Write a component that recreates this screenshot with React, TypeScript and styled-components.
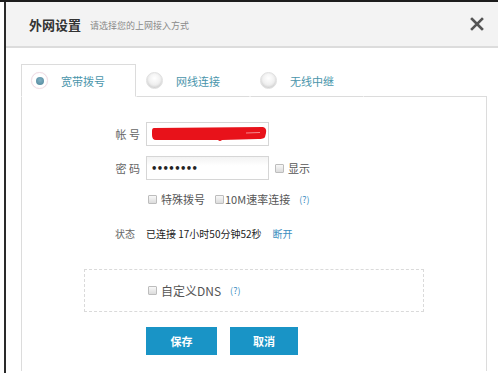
import React from "react";
import styled, { createGlobalStyle } from "styled-components";

const Global = createGlobalStyle`
  html, body { margin: 0; padding: 0; background: #fff; }
  body { font-family: "Noto Sans CJK SC", "Noto Sans", sans-serif; }
  * { box-sizing: border-box; }
`;

const Frame = styled.div`
  width: 498px;
  height: 373px;
  border-top: 2px solid #1c1c1c;
  overflow: hidden;
`;

const Dialog = styled.div`
  margin-left: 4px;
  height: 371px;
  border-left: 2px solid #2a2a2a;
  display: flex;
  flex-direction: column;
`;

const Header = styled.div`
  flex-shrink: 0;
  height: 46px;
  background: #f3f3f3;
  border-bottom: 2px solid #dcdcdc;
  display: flex;
  align-items: center;
  padding-left: 23px;
  padding-right: 14px;
`;

const Title = styled.span`
  font-size: 13px;
  font-weight: bold;
  color: #333;
`;

const Subtitle = styled.span`
  font-size: 9px;
  color: #8a8a8a;
  margin-left: 9px;
  margin-top: 2px;
`;

const Close = styled.div`
  margin-left: auto;
  width: 14px;
  height: 14px;
  display: flex;
`;

const Content = styled.div`
  padding: 16px 0 0 15px;
  flex: 1;
  min-height: 0;
`;

const Panel = styled.div`
  width: 466px;
  height: 307px;
  display: flex;
  flex-direction: column;
`;

const TabRow = styled.div`
  display: flex;
  height: 33px;
  flex-shrink: 0;
`;

const Tab = styled.div<{ $active?: boolean; $w: number }>`
  width: ${(p) => p.$w}px;
  display: flex;
  align-items: center;
  padding-left: 9px;
  border: 1px solid ${(p) => (p.$active ? "#dcdcdc" : "transparent")};
  border-bottom: 1px solid ${(p) => (p.$active ? "transparent" : "#dcdcdc")};
  background: #fff;
`;

const TabFill = styled.div`
  flex: 1;
  border-bottom: 1px solid #dcdcdc;
`;

const Radio = styled.span<{ $on?: boolean }>`
  width: 17px;
  height: 17px;
  border-radius: 50%;
  display: flex;
  align-items: center;
  justify-content: center;
  border: 1px solid ${(p) => (p.$on ? "#f0dce4" : "#e0e0e0")};
  background: ${(p) =>
    p.$on ? "#fff" : "radial-gradient(circle at 50% 35%, #ffffff 0%, #f0f0f0 50%, #d8d8d8 100%)"};
  box-shadow: ${(p) => (p.$on ? "0 0 1px #f3e6ea" : "inset 0 -1px 2px #cfcfcf")};
`;

const Dot = styled.span`
  width: 8px;
  height: 8px;
  border-radius: 50%;
  background: radial-gradient(circle at 50% 40%, #7fb0c2 0%, #4f8499 100%);
`;

const TabLabel = styled.span`
  margin-left: 13px;
  font-size: 11px;
  color: #4a95ab;
`;

const Body = styled.div`
  flex: 1;
  border-left: 1px solid #dcdcdc;
  border-right: 1px solid #dcdcdc;
  padding-top: 25px;
  display: flex;
  flex-direction: column;
`;

const Row = styled.div<{ $h: number; $mt?: number }>`
  display: flex;
  align-items: center;
  flex-shrink: 0;
  height: ${(p) => p.$h}px;
  margin-top: ${(p) => p.$mt ?? 0}px;
`;

const Label = styled.span<{ $pr?: number; $size?: number }>`
  width: 124px;
  padding-right: ${(p) => p.$pr ?? 6}px;
  text-align: right;
  font-size: ${(p) => p.$size ?? 11}px;
  color: #666;
  flex-shrink: 0;
`;

const Input = styled.div<{ $gray?: boolean }>`
  width: 123px;
  height: 24px;
  border: 1px solid #d6d6d6;
  background: ${(p) => (p.$gray ? "linear-gradient(#f3f3f3, #fff 40%)" : "#fff")};
  display: flex;
  align-items: center;
  padding-left: 3px;
  flex-shrink: 0;
`;

const Dots = styled.span`
  font-size: 10px;
  font-weight: bold;
  letter-spacing: -0.6px;
  color: #222;
  font-family: "DejaVu Sans", sans-serif;
  margin-left: 1px;
`;

const Check = styled.span<{ $ml?: number }>`
  width: 9px;
  height: 9px;
  border: 1px solid #bdbdbd;
  border-radius: 1px;
  background: linear-gradient(#f8f8f8, #dcdcdc);
  margin-left: ${(p) => p.$ml ?? 0}px;
  flex-shrink: 0;
`;

const CheckText = styled.span<{ $size?: number; $ml?: number }>`
  font-size: ${(p) => p.$size ?? 11}px;
  color: #555;
  margin-left: ${(p) => p.$ml ?? 4}px;
`;

const Help = styled.span<{ $ml: number }>`
  font-size: 9px;
  color: #3a8ec0;
  margin-left: ${(p) => p.$ml}px;
`;

const StatusText = styled.span`
  font-size: 10px;
  color: #222;
`;

const Link = styled.span`
  font-size: 10px;
  color: #3a8ec0;
  margin-left: 11px;
`;

const DashBox = styled.div`
  flex-shrink: 0;
  margin-top: 28px;
  margin-left: 62px;
  width: 340px;
  height: 43px;
  border: 1px dashed #dadada;
  display: flex;
  align-items: center;
  padding-left: 63px;
`;

const Buttons = styled.div`
  flex-shrink: 0;
  display: flex;
  gap: 13px;
  margin-top: 15px;
  margin-left: 124px;
`;

const Button = styled.div<{ $w: number }>`
  width: ${(p) => p.$w}px;
  height: 28px;
  background: #1994c6;
  color: #fff;
  font-size: 11px;
  font-weight: bold;
  display: flex;
  align-items: center;
  justify-content: center;
`;

export default function App() {
  return (
    <>
      <Global />
      <Frame>
        <Dialog>
          <Header>
            <Title>外网设置</Title>
            <Subtitle>请选择您的上网接入方式</Subtitle>
            <Close>
              <svg width="14" height="14" viewBox="0 0 14 14">
                <path d="M2 2 L12 12 M12 2 L2 12" stroke="#555" strokeWidth="2.6" strokeLinecap="square" />
              </svg>
            </Close>
          </Header>
          <Content>
            <Panel>
              <TabRow>
                <Tab $active $w={115}>
                  <Radio $on>
                    <Dot />
                  </Radio>
                  <TabLabel>宽带拨号</TabLabel>
                </Tab>
                <Tab $w={114}>
                  <Radio />
                  <TabLabel>网线连接</TabLabel>
                </Tab>
                <Tab $w={114}>
                  <Radio />
                  <TabLabel>无线中继</TabLabel>
                </Tab>
                <TabFill />
              </TabRow>
              <Body>
                <Row $h={24}>
                  <Label>帐 号</Label>
                  <Input>
                    <svg width="117" height="18" viewBox="0 0 117 18">
                      <path
                        d="M4 3 L113 2 Q117 3 116 8 L115 12 Q114 14 108 14 L72 15 Q70 17 68 15 L6 15 Q2 15 2 10 L2 6 Q2 3 4 3 Z"
                        fill="#e8121a"
                      />
                      <path d="M96 8 L110 7.5" stroke="#f58a8e" strokeWidth="1" />
                    </svg>
                  </Input>
                </Row>
                <Row $h={24} $mt={10}>
                  <Label>密 码</Label>
                  <Input $gray>
                    <Dots>••••••••</Dots>
                  </Input>
                  <Check $ml={6} />
                  <CheckText>显示</CheckText>
                </Row>
                <Row $h={16} $mt={11}>
                  <Label />
                  <Check $ml={2} />
                  <CheckText>特殊拨号</CheckText>
                  <Check $ml={10} />
                  <CheckText $ml={1}>10M速率连接</CheckText>
                  <Help $ml={9}>(?)</Help>
                </Row>
                <Row $h={16} $mt={18}>
                  <Label $pr={11} $size={10}>状态</Label>
                  <StatusText>已连接 17小时50分钟52秒</StatusText>
                  <Link>断开</Link>
                </Row>
                <DashBox>
                  <Check />
                  <CheckText $size={12}>自定义DNS</CheckText>
                  <Help $ml={9}>(?)</Help>
                </DashBox>
                <Buttons>
                  <Button $w={71}>保存</Button>
                  <Button $w={68}>取消</Button>
                </Buttons>
              </Body>
            </Panel>
          </Content>
        </Dialog>
      </Frame>
    </>
  );
}
